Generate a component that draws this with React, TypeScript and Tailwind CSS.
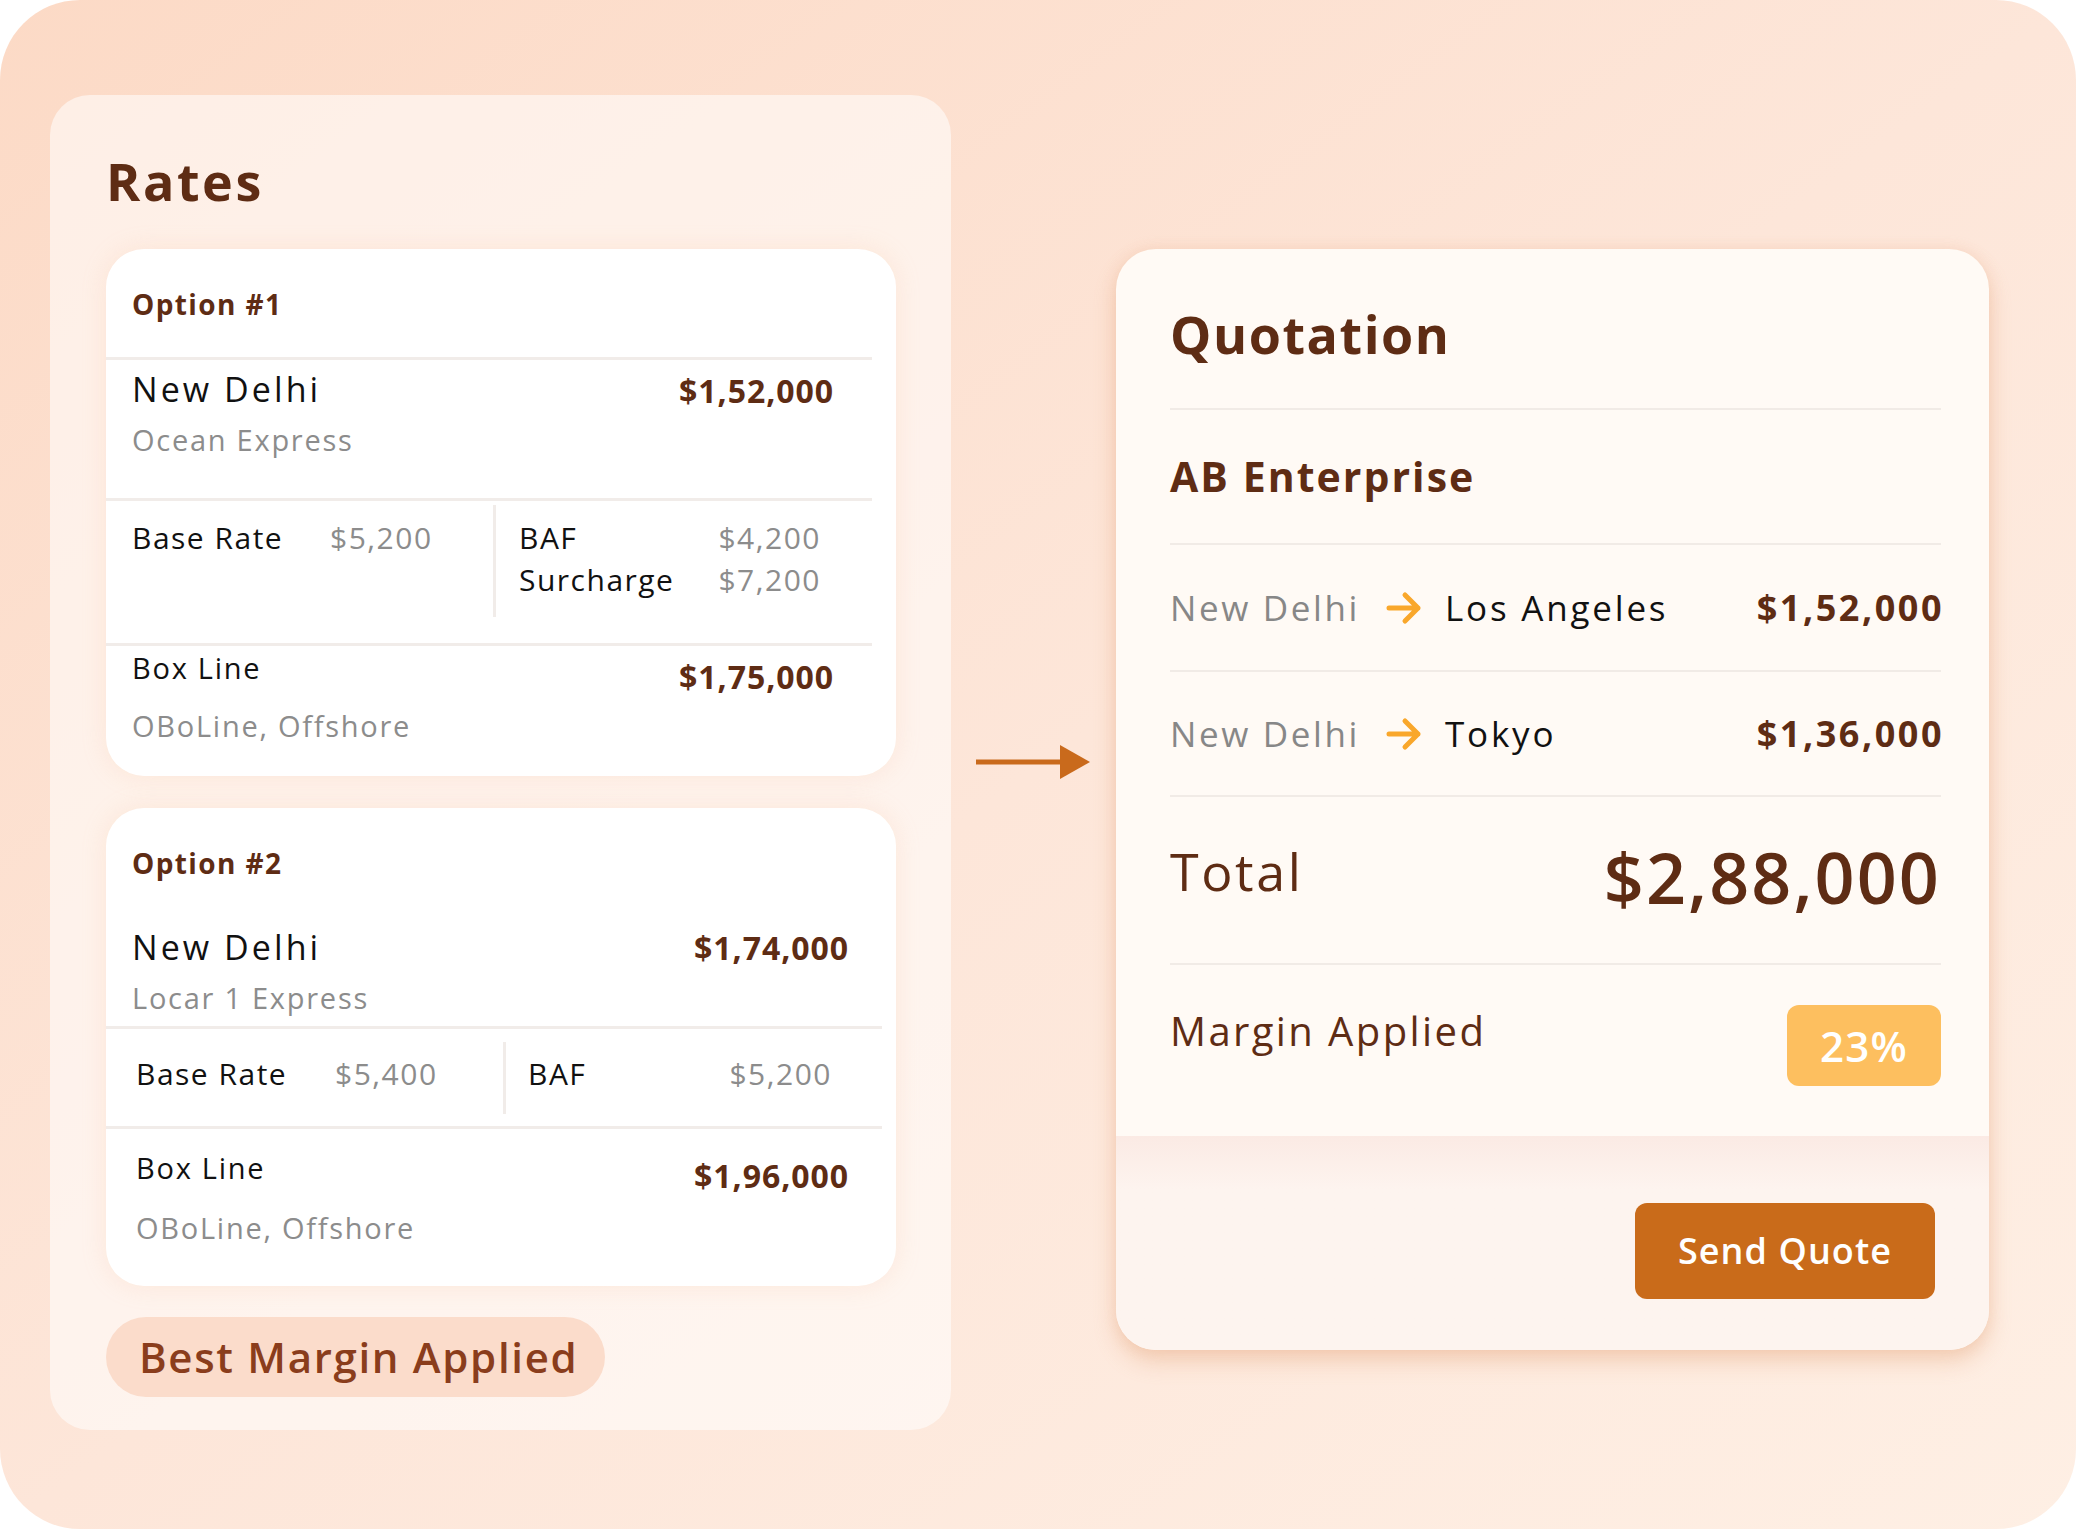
import React from 'react';

const brown = 'text-[#5e2c14]';

function Divider({ className = '' }: { className?: string }) {
  return <div className={`h-[3px] bg-[#f1ece9] ${className}`} />;
}

function RouteArrow() {
  return (
    <svg width="36" height="34" viewBox="0 0 36 34" fill="none" className="shrink-0">
      <path d="M3 17H32M19 4L32 17L19 30" stroke="#f9a72b" strokeWidth="5" strokeLinecap="round" strokeLinejoin="round" />
    </svg>
  );
}

function OptionOne() {
  return (
    <div className="bg-white rounded-[38px] shadow-[0_0_24px_rgba(244,186,150,0.22)] h-[527px] flex flex-col">
      <div className="h-[108px] pt-[41px] pl-[26px]">
        <div className={`text-[28px] leading-none font-bold tracking-[0.05em] ${brown}`}>Option #1</div>
      </div>
      <Divider className="mr-[24px]" />
      <div className="h-[138px] flex justify-between pl-[26px] pr-[62px]">
        <div className="pt-[12px]">
          <div className="text-[34px] leading-none text-[#111] tracking-[0.09em]">New Delhi</div>
          <div className="mt-[19px] text-[29px] leading-none text-[#8c8c8c] tracking-[0.06em]">Ocean Express</div>
        </div>
        <div className={`pt-[15px] text-[32px] leading-none font-bold tracking-[0.03em] ${brown}`}>$1,52,000</div>
      </div>
      <Divider className="mr-[24px]" />
      <div className="h-[142px] flex">
        <div className="w-[387px] flex pl-[26px] pt-[22px] text-[30px] leading-none tracking-[0.05em]">
          <div className="w-[198px] text-[#111]">Base Rate</div>
          <div className="text-[#8c8c8c]">$5,200</div>
        </div>
        <div className="w-[3px] h-[112px] mt-[4px] bg-[#f1ece9]" />
        <div className="flex-1 pl-[23px] pr-[75px] pt-[22px] text-[30px] leading-none tracking-[0.05em]">
          <div className="flex justify-between">
            <span className="text-[#111]">BAF</span>
            <span className="text-[#8c8c8c]">$4,200</span>
          </div>
          <div className="flex justify-between mt-[12px]">
            <span className="text-[#111]">Surcharge</span>
            <span className="text-[#8c8c8c]">$7,200</span>
          </div>
        </div>
      </div>
      <Divider className="mr-[24px]" />
      <div className="h-[130px] flex justify-between pl-[26px] pr-[62px]">
        <div className="pt-[7px] text-[29px] leading-none tracking-[0.06em]">
          <div className="text-[#111]">Box Line</div>
          <div className="mt-[29px] text-[#8c8c8c]">OBoLine, Offshore</div>
        </div>
        <div className={`pt-[15px] text-[32px] leading-none font-bold tracking-[0.03em] ${brown}`}>$1,75,000</div>
      </div>
    </div>
  );
}

function OptionTwo() {
  return (
    <div className="mt-[32px] bg-white rounded-[38px] shadow-[0_0_24px_rgba(244,186,150,0.22)] h-[478px] flex flex-col">
      <div className="h-[108px] pt-[41px] pl-[26px]">
        <div className={`text-[28px] leading-none font-bold tracking-[0.05em] ${brown}`}>Option #2</div>
      </div>
      <div className="h-[110px] flex justify-between pl-[26px] pr-[47px]">
        <div className="pt-[14px]">
          <div className="text-[34px] leading-none text-[#111] tracking-[0.09em]">New Delhi</div>
          <div className="mt-[19px] text-[29px] leading-none text-[#8c8c8c] tracking-[0.06em]">Locar 1 Express</div>
        </div>
        <div className={`pt-[16px] text-[32px] leading-none font-bold tracking-[0.03em] ${brown}`}>$1,74,000</div>
      </div>
      <Divider className="mr-[14px]" />
      <div className="h-[97px] flex">
        <div className="w-[397px] flex pl-[30px] pt-[30px] text-[30px] leading-none tracking-[0.05em]">
          <div className="w-[199px] text-[#111]">Base Rate</div>
          <div className="text-[#8c8c8c]">$5,400</div>
        </div>
        <div className="w-[3px] h-[72px] mt-[13px] bg-[#f1ece9]" />
        <div className="flex-1 flex justify-between pl-[22px] pr-[64px] pt-[30px] text-[30px] leading-none tracking-[0.05em]">
          <span className="text-[#111]">BAF</span>
          <span className="text-[#8c8c8c]">$5,200</span>
        </div>
      </div>
      <Divider className="mr-[14px]" />
      <div className="flex-1 flex justify-between pl-[30px] pr-[47px]">
        <div className="pt-[24px] text-[29px] leading-none tracking-[0.06em]">
          <div className="text-[#111]">Box Line</div>
          <div className="mt-[31px] text-[#8c8c8c]">OBoLine, Offshore</div>
        </div>
        <div className={`pt-[31px] text-[32px] leading-none font-bold tracking-[0.03em] ${brown}`}>$1,96,000</div>
      </div>
    </div>
  );
}

function RouteRow({ to, price }: { to: string; price: string }) {
  return (
    <div className="flex items-center h-[35px] text-[35px] leading-none">
      <div className="w-[216px] text-[#878787] tracking-[0.075em]">New Delhi</div>
      <RouteArrow />
      <div className="ml-[23px] text-[#111] tracking-[0.08em]">{to}</div>
      <div className={`ml-auto mr-[-3px] text-[36px] font-bold tracking-[0.07em] ${brown}`}>{price}</div>
    </div>
  );
}

export default function App() {
  return (
    <div className="w-[2076px] h-[1529px] rounded-[80px] overflow-hidden bg-linear-to-br from-[#fcdac6] via-[#fde6d9] to-[#feefe4] font-['Open_Sans','Noto_Sans',sans-serif]">
      <div className="flex items-start pl-[50px] pt-[95px]">
        {/* Rates panel */}
        <div className="w-[901px] h-[1335px] rounded-[40px] bg-white/55 pt-[60px] pl-[56px] pr-[55px]">
          <h1 className={`text-[52px] leading-none font-bold tracking-[0.05em] ${brown}`}>Rates</h1>
          <div className="mt-[42px]">
            <OptionOne />
            <OptionTwo />
          </div>
          <div className="mt-[31px] w-[499px] h-[80px] rounded-full bg-[#fbdccb] flex items-center pl-[33px]">
            <span className="text-[42px] leading-none font-semibold tracking-[0.04em] text-[#8a3d1c]">Best Margin Applied</span>
          </div>
        </div>

        {/* Flow arrow */}
        <div className="w-[165px] mt-[650px] pl-[25px]">
          <svg width="114" height="34" viewBox="0 0 114 34">
            <rect x="0" y="14.5" width="86" height="5" fill="#c96a1c" />
            <polygon points="84,0 114,17 84,34" fill="#c96a1c" />
          </svg>
        </div>

        {/* Quotation card */}
        <div className="mt-[154px] w-[873px] h-[1101px] rounded-[40px] overflow-hidden bg-[#fffaf5] shadow-[0_12px_22px_rgba(225,150,100,0.32),0_0_14px_rgba(240,190,160,0.3)] flex flex-col">
          <div className="h-[887px] pl-[54px] pr-[48px] pt-[59px]">
            <h2 className={`text-[52px] leading-none font-bold tracking-[0.03em] ${brown}`}>Quotation</h2>
            <div className="mt-[48px] h-[2px] bg-[#f1ebe6]" />
            <div className={`mt-[46px] text-[41px] leading-none font-bold tracking-[0.05em] ${brown}`}>AB Enterprise</div>
            <div className="mt-[46px] h-[2px] bg-[#f1ebe6]" />
            <div className="mt-[45px]">
              <RouteRow to="Los Angeles" price="$1,52,000" />
            </div>
            <div className="mt-[45px] h-[2px] bg-[#f1ebe6]" />
            <div className="mt-[44px]">
              <RouteRow to="Tokyo" price="$1,36,000" />
            </div>
            <div className="mt-[44px] h-[2px] bg-[#f1ebe6]" />
            <div className="mt-[46px] h-[68px] flex justify-between items-start">
              <span className={`mt-[2px] text-[52px] leading-none tracking-[0.05em] ${brown}`}>Total</span>
              <span className={`mt-[-1px] text-[70px] leading-none font-semibold tracking-[0.03em] ${brown}`}>$2,88,000</span>
            </div>
            <div className="mt-[52px] h-[2px] bg-[#f1ebe6]" />
            <div className="mt-[40px] flex justify-between items-start">
              <span className={`mt-[6px] text-[40px] leading-none tracking-[0.06em] ${brown}`}>Margin Applied</span>
              <span className="w-[154px] h-[81px] rounded-[12px] bg-[#fdbf5f] flex items-center justify-center text-[42px] leading-none font-semibold tracking-[0.03em] text-white">
                23%
              </span>
            </div>
          </div>
          <div className="flex-1 flex justify-end items-start pt-[67px] pr-[54px] bg-linear-to-b from-[#fbeae4] via-[#fdf4ef] via-25% to-[#fdf4ef]">
            <button className="w-[300px] h-[96px] rounded-[12px] bg-[#c96b1a] text-white text-[36px] leading-none font-semibold tracking-[0.03em]">
              Send Quote
            </button>
          </div>
        </div>
      </div>
    </div>
  );
}
